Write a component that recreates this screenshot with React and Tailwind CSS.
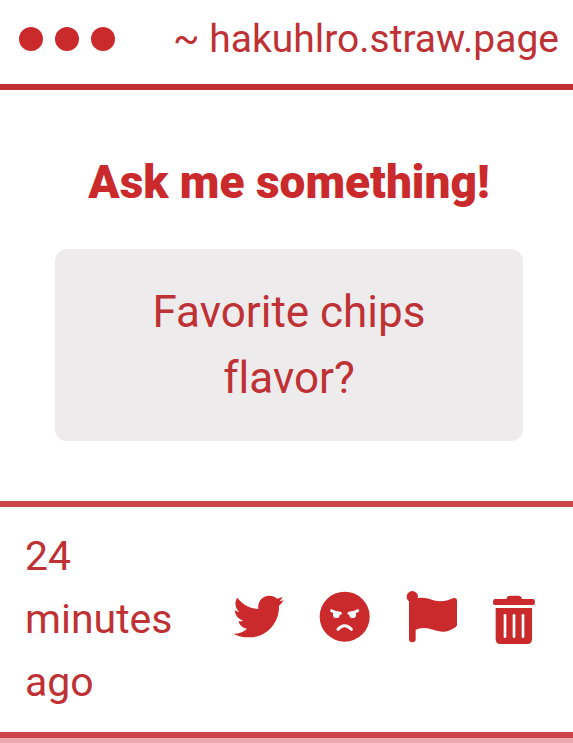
const TwitterIcon = () => (
    <svg viewBox="0 0 162 162" className="w-full h-full" fill="currentColor" aria-hidden="true">
        <path d="M16 20 C32 41 52 51 79 54 C76 32 91 14 111 14 C121 14 129 17 136 23 Q144 21 152 17 Q149 25 143 30 Q149 30 155 28 Q150 37 141 44 C143 92 106 139 54 139 Q24 140 4 128 Q27 129 45 114 Q24 109 19 90 Q27 92 33 89 Q11 82 8 58 Q14 62 22 63 C10 53 6 35 16 20 Z" />
    </svg>
);

const AngryIcon = () => (
    <svg viewBox="0 0 162 162" className="w-full h-full" aria-hidden="true">
        <circle cx="80" cy="77" r="75" fill="currentColor" />
        <g fill="#fff">
            <circle cx="55" cy="71" r="10" />
            <circle cx="104" cy="71" r="10" />
        </g>
        <g fill="none" stroke="#fff" strokeLinecap="round" strokeWidth="9">
            <path d="M41 59 Q54 67 67 67" />
            <path d="M119 59 Q106 67 93 67" />
            <path d="M60 115 Q80 93 100 115" />
        </g>
    </svg>
);

const FlagIcon = () => (
    <svg viewBox="0 0 162 162" className="w-full h-full" fill="currentColor" aria-hidden="true">
        <circle cx="25" cy="17" r="17" />
        <rect x="15" y="10" width="20" height="144" rx="10" />
        <path d="M32 25 C62 12 84 31 108 31 C126 31 138 25 149 21 Q159 19 159 30 V103 Q158 107 152 110 C138 118 129 122 118 122 C96 122 80 111 60 111 Q45 111 32 118 Z" />
    </svg>
);

const TrashIcon = () => (
    <svg viewBox="0 0 162 162" className="w-full h-full" fill="currentColor" aria-hidden="true">
        <path d="M49 24 Q51 14 60 14 H85 Q94 14 96 24 H130 Q135 25 135 33 Q135 42 130 42 H14 Q9 42 9 33 Q9 25 14 24 Z" />
        <path d="M17 51 H126 V145 Q126 159 112 159 H31 Q17 159 17 145 Z" />
        <g stroke="#fff" strokeLinecap="round" strokeWidth="8">
            <path d="M45 73 V137" />
            <path d="M72 73 V137" />
            <path d="M99 73 V137" />
        </g>
    </svg>
);

const actions = [
    { label: 'Share on Twitter', icon: <TwitterIcon /> },
    { label: 'Block', icon: <AngryIcon /> },
    { label: 'Report', icon: <FlagIcon /> },
    { label: 'Delete', icon: <TrashIcon /> },
];

export default function App() {
    return (
        <div className="min-h-screen bg-[#ecabb1] font-[Roboto,sans-serif] text-[#cb2a2c] [font-variant-ligatures:none]">
            <div className="bg-white">
                <header className="flex items-center justify-between border-b-6 border-[#c03030] pt-[11px] pb-[17px] pl-[19px] pr-[14px]">
                    <div className="flex gap-3">
                        {[1, 2, 3].map((i) => (
                            <span key={i} className="size-6 rounded-full bg-current"></span>
                        ))}
                    </div>
                    <p className="text-[39px] leading-[56px] text-[#be3134]">~ hakuhlro.straw.page</p>
                </header>

                <main className="pt-[59px] pb-[60px] pl-[55px] pr-[50px] text-center">
                    <h1 className="text-[46px] leading-[66px] font-black">Ask me something!</h1>
                    <p className="mt-[34px] rounded-xl bg-[#edebec] px-20 py-[30px] text-[44px] leading-[66px] text-[#be3134]">
                        Favorite chips flavor?
                    </p>
                </main>

                <footer className="flex items-center justify-between border-y-6 border-[#cc4649] py-[18px] pl-[25px] pr-[29px]">
                    <p className="w-min text-[41px] leading-[63px] text-[#be3134]">24 minutes ago</p>
                    <div className="flex gap-8 pb-1">
                        {actions.map((a) => (
                            <button key={a.label} aria-label={a.label} className="size-[54px]">
                                {a.icon}
                            </button>
                        ))}
                    </div>
                </footer>
            </div>
        </div>
    );
}
